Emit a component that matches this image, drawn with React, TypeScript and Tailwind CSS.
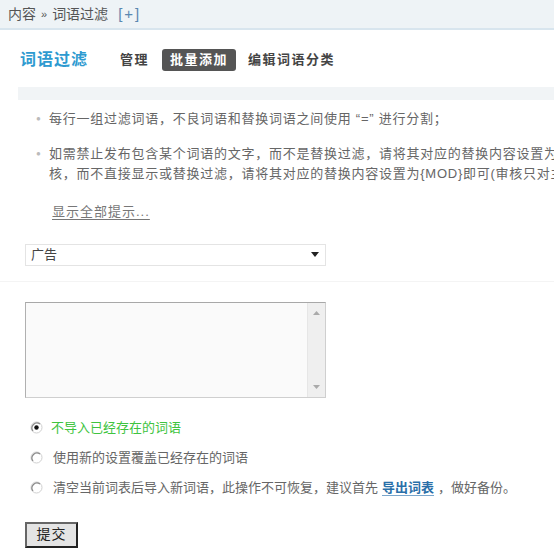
import React from "react";

const font = { fontFamily: '"Liberation Sans", "Noto Sans CJK SC", sans-serif' };

function Radio({ checked }: { checked?: boolean }) {
  return (
    <svg width="13" height="13" viewBox="0 0 13 13" className="shrink-0">
      <circle cx="6.5" cy="6.5" r="5.5" fill="#fff" stroke="#d0d0d0" />
      <path d="M3 10 A5 5 0 0 1 10 3" fill="none" stroke="#888" strokeWidth="1.2" />
      {checked && <circle cx="6.5" cy="6.5" r="2.2" fill="#111" />}
    </svg>
  );
}

export default function App() {
  return (
    <div className="w-[554px] h-[554px] overflow-hidden bg-white text-[#555]" style={font}>
      {/* breadcrumb */}
      <div className="h-[30px] bg-[#eef3f6] border-b-2 border-[#d8e5ee] pl-[8px] flex items-center text-[14px]">
        <span>内容</span>
        <span className="mx-[5px] text-[11px]">»</span>
        <span>词语过滤</span>
        <span className="ml-[10px] text-[#5a88b0] text-[15px] tracking-[2px]">[+]</span>
      </div>

      {/* title + tabs */}
      <div className="flex items-center mt-[18px] pl-[20px] h-[24px]">
        <h2 className="text-[16px] font-bold tracking-[1px] text-[#2e9ad0]">词语过滤</h2>
        <div className="flex items-center ml-[32px] text-[13px] font-bold tracking-[1.5px] text-[#444]">
          <span>管理</span>
          <span className="ml-[13px] bg-[#555] text-white rounded-[3px] px-[8px] h-[22px] flex items-center">批量添加</span>
          <span className="ml-[12px]">编辑词语分类</span>
        </div>
      </div>

      {/* table header band */}
      <div className="ml-[18px] mt-[15px] h-[13px] bg-[#f1f4f6]" />

      {/* tips */}
      <ul className="mt-[9px] text-[13px] tracking-[0.75px] text-[#666] leading-[20px] whitespace-nowrap">
        <li className="flex">
          <span className="w-[49px] shrink-0 pl-[36px] text-[#bbb] text-[8px]">●</span>
          <span>每行一组过滤词语，不良词语和替换词语之间使用 “=” 进行分割；</span>
        </li>
        <li className="flex mt-[15px]">
          <span className="w-[49px] shrink-0 pl-[36px] text-[#bbb] text-[8px]">●</span>
          <span>
            如需禁止发布包含某个词语的文字，而不是替换过滤，请将其对应的替换内容设置为{"{BANNED}"}即可；如需当用户发布包含某个词语的文字时，自动标记为需要人工审
            <br />
            核，而不直接显示或替换过滤，请将其对应的替换内容设置为{"{MOD}"}即可(审核只对主题和回复有效)。
          </span>
        </li>
      </ul>
      <div className="mt-[18px] ml-[52px] text-[13px] tracking-[1px] text-[#777] underline underline-offset-[3px]">
        显示全部提示...
      </div>

      {/* category select */}
      <div className="mt-[22px] ml-[25px] w-[301px] h-[22px] border border-[#e4e4e4] bg-white flex items-center justify-between pl-[5px] pr-[6px] text-[13px] text-[#444]">
        <span>广告</span>
        <svg width="8" height="5" viewBox="0 0 8 5">
          <path d="M0 0 H8 L4 5 Z" fill="#222" />
        </svg>
      </div>
      <div className="mt-[15px] border-t border-[#f4f4f4]" />

      {/* textarea */}
      <div className="mt-[20px] ml-[25px] w-[301px] h-[96px] border border-[#cfcfcf] border-t-[#a8a8a8] border-l-[#b0b0b0] bg-[#fafafa] flex">
        <div className="flex-1" />
        <div className="w-[18px] bg-[#efefef] border-l border-[#e6e6e6] flex flex-col items-center justify-between py-[8px]">
          <svg width="7" height="4" viewBox="0 0 7 4">
            <path d="M0 4 L3.5 0 L7 4 Z" fill="#aaa" />
          </svg>
          <svg width="7" height="4" viewBox="0 0 7 4">
            <path d="M0 0 L3.5 4 L7 0 Z" fill="#aaa" />
          </svg>
        </div>
      </div>

      {/* options */}
      <div className="mt-[21px] ml-[30px] flex flex-col gap-[12px] text-[13px] leading-[18px]">
        <label className="flex items-center">
          <Radio checked />
          <span className="ml-[8px] text-[#3fc43f]">不导入已经存在的词语</span>
        </label>
        <label className="flex items-center">
          <Radio />
          <span className="ml-[10px] text-[#666]">使用新的设置覆盖已经存在的词语</span>
        </label>
        <label className="flex items-center whitespace-nowrap">
          <Radio />
          <span className="ml-[10px] text-[#666]">
            清空当前词表后导入新词语，此操作不可恢复，建议首先
            <a className="mx-[4px] font-bold text-[#2a6fa8] underline underline-offset-[3px] decoration-[#7aa6cc]">导出词表</a>
            ，做好备份。
          </span>
        </label>
      </div>

      {/* submit */}
      <button className="mt-[25px] ml-[25px] w-[53px] h-[26px] bg-[#e4e4e4] border-2 border-t-[#666] border-l-[#666] border-b-[#222] border-r-[#222] text-[14px] text-[#222] tracking-[1px]">
        提交
      </button>
    </div>
  );
}
